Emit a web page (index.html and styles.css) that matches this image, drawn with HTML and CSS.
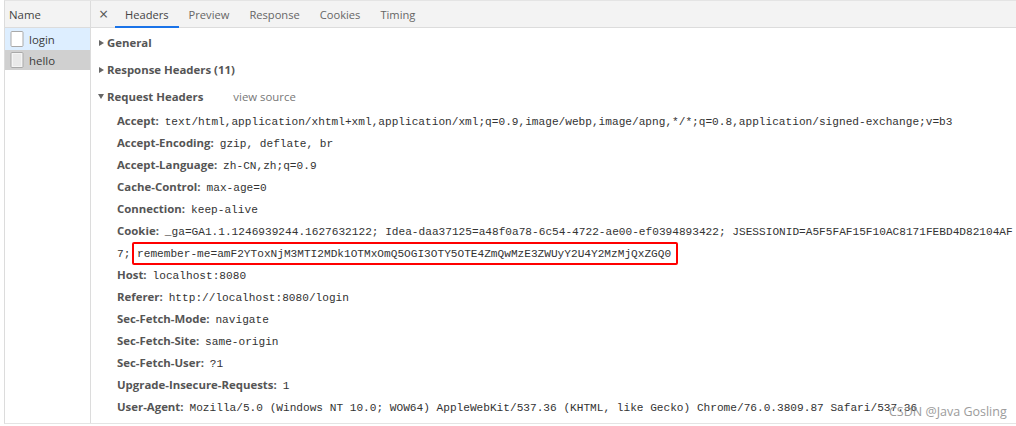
FILE: index.html
```html
<!DOCTYPE html>
<html lang="en">
<head>
<meta charset="utf-8">
<title>Network</title>
<link rel="stylesheet" href="styles.css">
</head>
<body>
<div class="panel">
  <aside class="names">
    <div class="names-head">Name</div>
    <div class="req selected">
      <svg class="doc" viewBox="0 0 14 16"><rect x="1" y="0.5" width="12" height="15" rx="1" fill="#fff" stroke="#a9a9a9"/></svg>
      <span>login</span>
    </div>
    <div class="req active">
      <svg class="doc" viewBox="0 0 14 16"><rect x="1" y="0.5" width="12" height="15" rx="1" fill="#f4f4f4" stroke="#a9a9a9"/><path d="M3 3h8M3 5h8M3 7h8M3 9h8M3 11h8M3 13h8" stroke="#dedede"/></svg>
      <span>hello</span>
    </div>
  </aside>
  <main class="details">
    <nav class="tabs">
      <span class="close">×</span>
      <span class="tab current">Headers</span>
      <span class="tab">Preview</span>
      <span class="tab">Response</span>
      <span class="tab">Cookies</span>
      <span class="tab">Timing</span>
    </nav>
    <section class="content">
      <h3 class="sec"><i class="tri"></i>General</h3>
      <h3 class="sec"><i class="tri"></i>Response Headers (11)</h3>
      <h3 class="sec open"><i class="tri down"></i>Request Headers<span class="source">view source</span></h3>
      <div class="rows">
        <div class="row"><b>Accept:</b> <code>text/html,application/xhtml+xml,application/xml;q=0.9,image/webp,image/apng,*/*;q=0.8,application/signed-exchange;v=b3</code></div>
        <div class="row"><b>Accept-Encoding:</b> <code>gzip, deflate, br</code></div>
        <div class="row"><b>Accept-Language:</b> <code>zh-CN,zh;q=0.9</code></div>
        <div class="row"><b>Cache-Control:</b> <code>max-age=0</code></div>
        <div class="row"><b>Connection:</b> <code>keep-alive</code></div>
        <div class="row"><b>Cookie:</b> <code>_ga=GA1.1.1246939244.1627632122; Idea-daa37125=a48f0a78-6c54-4722-ae00-ef0394893422; JSESSIONID=A5F5FAF15F10AC8171FEBD4D82104AF</code></div>
        <div class="row cont"><code>7; <span class="mark">remember-me=amF2YToxNjM3MTI2MDk1OTMxOmQ5OGI3OTY5OTE4ZmQwMzE3ZWUyY2U4Y2MzMjQxZGQ0</span></code></div>
        <div class="row"><b>Host:</b> <code>localhost:8080</code></div>
        <div class="row"><b>Referer:</b> <code>http://localhost:8080/login</code></div>
        <div class="row"><b>Sec-Fetch-Mode:</b> <code>navigate</code></div>
        <div class="row"><b>Sec-Fetch-Site:</b> <code>same-origin</code></div>
        <div class="row"><b>Sec-Fetch-User:</b> <code>?1</code></div>
        <div class="row"><b>Upgrade-Insecure-Requests:</b> <code>1</code></div>
        <div class="row"><b>User-Agent:</b> <code>Mozilla/5.0 (Windows NT 10.0; WOW64) AppleWebKit/537.36 (KHTML, like Gecko) Chrome/76.0.3809.87 Safari/537.36</code></div>
      </div>
    </section>
  </main>
</div>
<div class="watermark">CSDN @Java Gosling</div>
</body>
</html>
```
FILE: styles.css
```css
* { box-sizing: border-box; }
html, body { margin: 0; height: 100%; background: #fff; overflow: hidden; }
body { font-family: "Open Sans", "Noto Sans", sans-serif; font-size: 11.4px; color: #444; position: relative; }
.panel { display: flex; height: 424px; margin-left: 4px; border-left: 1px solid #dcdcdc; border-top: 1px solid #e4e4e4; border-bottom: 1px solid #e4e4e4; }
.names { width: 86px; flex: none; border-right: 1px solid #dcdcdc; }
.names-head { height: 27px; background: #f3f3f3; border-bottom: 1px solid #dcdcdc; padding-left: 4px; line-height: 27px; color: #444; }
.req { height: 22px; display: flex; align-items: center; gap: 5px; padding-left: 5px; color: #3a3a3a; }
.req.selected { background: #ddeeff; }
.req.active { height: 20px; background: #d0d0d0; }
.doc { width: 14px; height: 16px; flex: none; }
.details { flex: 1; min-width: 0; }
.tabs { height: 27px; background: #f3f3f3; border-bottom: 1px solid #dcdcdc; display: flex; padding-left: 8px; font-size: 11.15px; }
.close { width: 16px; line-height: 27px; font-size: 16px; color: #555; }
.tab { height: 27px; line-height: 27px; padding: 0 10px; color: #666; }
.tab.current { color: #444; border-bottom: 2px solid #1a73e8; }
.content { padding-left: 6px; }
.sec { margin: 0; height: 27px; display: flex; align-items: center; font-size: 11.4px; font-weight: 700; color: #555; white-space: nowrap; }
.sec:first-child { margin-top: 1px; }
.tri { width: 0; height: 0; border-left: 5px solid #666; border-top: 3.5px solid transparent; border-bottom: 3.5px solid transparent; margin-right: 3px; margin-left: 2px; }
.tri.down { border-left: 3.5px solid transparent; border-right: 3.5px solid transparent; border-top: 5px solid #666; border-bottom: 0; margin-left: 1px; margin-right: 3px; }
.source { font-weight: 400; color: #777; margin-left: 30px; }
.rows { padding-left: 20px; }
.row { height: 22px; line-height: 22px; white-space: nowrap; }
.row b { font-weight: 700; color: #555; margin-right: 3px; }
.row code { font-family: "Liberation Mono", monospace; font-size: 11.13px; color: #333; }
.mark { position: relative; }
.mark::after { content: ""; position: absolute; left: -5px; right: -7px; top: -6px; bottom: -5px; border: 2px solid #f00; border-radius: 2px; }
.watermark { position: absolute; left: 889px; top: 403px; font-size: 12.5px; color: #8b8b8b; opacity: .85; white-space: nowrap; }
```
